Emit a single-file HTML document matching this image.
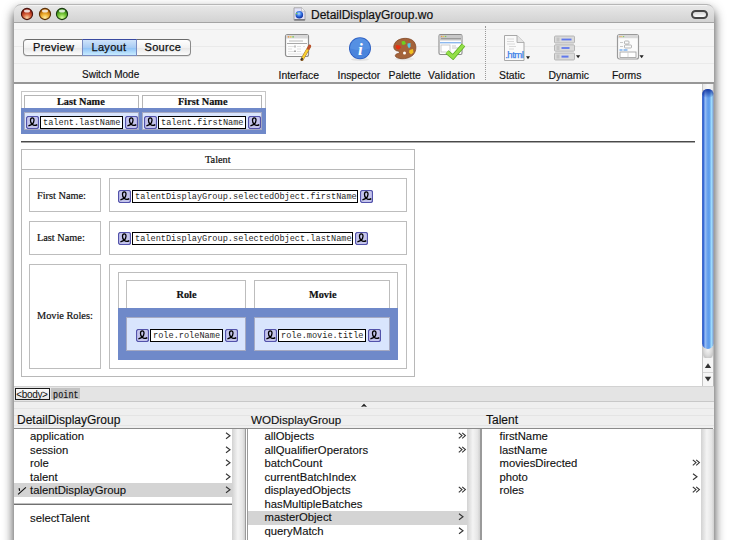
<!DOCTYPE html>
<html><head><meta charset="utf-8">
<style>
*{box-sizing:border-box;margin:0;padding:0}
html,body{width:729px;height:540px;overflow:hidden;background:#fff;position:relative;font-family:"Liberation Sans",sans-serif}
div,span,svg{position:absolute}
.nw{white-space:nowrap}
.ser{font-family:"Liberation Serif",serif}
.mono{font-family:"Liberation Mono",monospace}
#shadow{left:14px;top:4px;width:700px;height:560px;border-radius:7px 7px 0 0;box-shadow:0 6px 11px 0 rgba(0,0,0,0.8)}
#win{left:14px;top:4px;width:700px;height:560px;background:#f5f5f5;border-radius:7px 7px 0 0;overflow:hidden}
.light{top:7px;width:13px;height:13px;border-radius:50%}
.tl{top:69.5px;font-size:10.4px;color:#111;white-space:nowrap;-webkit-text-stroke:0.15px #111}
.stripe{left:14px;width:700px;height:1px;background:#eaeaea}
.tbox{height:13px;border:1px solid #000;background:#fff}
.tbox span{position:static;display:block;font-size:8.6px;line-height:12px;padding-left:2px;color:#262626;white-space:nowrap}
.gb{border:1px solid #bdbdbd}
.bi{font-size:11px;color:#111}
.bh{font-size:11.7px;color:#111}
.chev{font-size:11px;color:#444}
</style></head><body>
<div id="shadow"></div>
<div id="win"></div>

<div style="left:14px;top:4px;width:700px;height:18px;background:linear-gradient(#e8e8e8,#d3d3d3);border-top:1px solid #b6b6b6;border-radius:7px 7px 0 0"></div>
<div style="left:21px;top:5px;width:686px;height:1px;background:#f4f4f4"></div>
<div style="left:14px;top:22px;width:700px;height:1px;background:#a4a4a4"></div>
<svg style="left:20px;top:7px" width="14" height="14" viewBox="0 0 14 14"><defs><radialGradient id="g27" cx="50%" cy="85%" r="65%"><stop offset="0" stop-color="#f8d8a8"/><stop offset="0.55" stop-color="#d8603a"/><stop offset="1" stop-color="#9c2414"/></radialGradient></defs><circle cx="7" cy="7" r="5.6" fill="url(#g27)" stroke="#4a1610" stroke-width="1.1"/><ellipse cx="7" cy="3.9" rx="3" ry="1.5" fill="#fff" opacity="0.8"/></svg>
<svg style="left:37.6px;top:7px" width="14" height="14" viewBox="0 0 14 14"><defs><radialGradient id="g44" cx="50%" cy="85%" r="65%"><stop offset="0" stop-color="#fff0a8"/><stop offset="0.55" stop-color="#f0b030"/><stop offset="1" stop-color="#b86808"/></radialGradient></defs><circle cx="7" cy="7" r="5.6" fill="url(#g44)" stroke="#5a3008" stroke-width="1.1"/><ellipse cx="7" cy="3.9" rx="3" ry="1.5" fill="#fff" opacity="0.8"/></svg>
<svg style="left:55.1px;top:7px" width="14" height="14" viewBox="0 0 14 14"><defs><radialGradient id="g62" cx="50%" cy="85%" r="65%"><stop offset="0" stop-color="#d8ffa0"/><stop offset="0.55" stop-color="#78c838"/><stop offset="1" stop-color="#3a8a18"/></radialGradient></defs><circle cx="7" cy="7" r="5.6" fill="url(#g62)" stroke="#1a3a10" stroke-width="1.1"/><ellipse cx="7" cy="3.9" rx="3" ry="1.5" fill="#fff" opacity="0.8"/></svg>
<svg style="left:293px;top:7px" width="13" height="14" viewBox="0 0 13 14"><defs><radialGradient id="gl" cx="45%" cy="35%" r="60%"><stop offset="0" stop-color="#b8e0ff"/><stop offset="0.5" stop-color="#3a7ae8"/><stop offset="1" stop-color="#1030a0"/></radialGradient></defs><path d="M1 0.8h7.6l3.4 3.4v9H1z" fill="#e2e2f6" stroke="#9a9a9a" stroke-width="0.8"/><path d="M8.6 0.8v3.4H12" fill="#fafafa" stroke="#aaa" stroke-width="0.6"/><circle cx="6.3" cy="7.8" r="3.8" fill="url(#gl)"/><circle cx="3.6" cy="6.6" r="0.8" fill="#7ad040"/><rect x="1.4" y="12.4" width="10.4" height="0.9" fill="#444"/></svg>
<div class="nw" style="left:311px;top:7.5px;font-size:12px;color:#111;-webkit-text-stroke:0.2px #111">DetailDisplayGroup.wo</div>
<div style="left:690.5px;top:10px;width:17.5px;height:9px;border:2px solid #454545;border-radius:5px;background:linear-gradient(#d6d6d6,#fcfcfc)"></div>
<div class="stripe" style="top:29px"></div>
<div class="stripe" style="top:46px"></div>
<div class="stripe" style="top:63px"></div>
<div style="left:14px;top:82px;width:700px;height:2px;background:#979797"></div>
<div style="left:23px;top:39px;width:168px;height:17px;border:1px solid #8a8a8a;border-top-color:#6a6a6a;border-radius:4px;background:linear-gradient(#ffffff,#f2f2f2 50%,#e6e6e6 51%,#fcfcfc);box-shadow:0 1px 0 rgba(0,0,0,0.08)"></div>
<div style="left:82px;top:39px;width:54.5px;height:17px;border:1px solid #7a8cc0;border-top-color:#3a4aa0;background:linear-gradient(#d0e4fa,#a8ccf4 50%,#8cc0f6 51%,#c8ecff)"></div>
<div class="nw" style="left:33px;top:41px;font-size:11px;letter-spacing:0.3px;color:#111;-webkit-text-stroke:0.25px #111">Preview</div>
<div class="nw" style="left:91.5px;top:41px;font-size:11px;letter-spacing:0.3px;color:#111;-webkit-text-stroke:0.25px #111">Layout</div>
<div class="nw" style="left:144.5px;top:41px;font-size:11px;letter-spacing:0.3px;color:#111;-webkit-text-stroke:0.25px #111">Source</div>
<div class="tl" style="left:82px;top:69px;font-size:10px">Switch Mode</div>
<div class="tl" style="left:278.5px">Interface</div>
<div class="tl" style="left:337.5px">Inspector</div>
<div class="tl" style="left:388.5px">Palette</div>
<div class="tl" style="left:428px;letter-spacing:0.25px">Validation</div>
<div class="tl" style="left:499px">Static</div>
<div class="tl" style="left:548.5px">Dynamic</div>
<div class="tl" style="left:612px">Forms</div>
<div style="left:485px;top:26px;width:1px;height:54px;border-left:1px dotted #999"></div>
<svg style="left:284px;top:33px" width="28" height="28" viewBox="0 0 28 28">
<rect x="1.5" y="1.5" width="23" height="22" rx="2" fill="#fdfdfd" stroke="#8e8e8e" stroke-width="1.2"/>
<rect x="2" y="2" width="22" height="3.5" fill="#d8d8d8"/>
<circle cx="4.5" cy="3.8" r="0.9" fill="#e89a50"/><circle cx="6.8" cy="3.8" r="0.9" fill="#e8c850"/><circle cx="9.1" cy="3.8" r="0.9" fill="#80c860"/>
<rect x="5" y="7.5" width="14" height="1" fill="#bbb"/>
<rect x="3" y="10" width="20" height="1" fill="#a8a8a8"/>
<path d="M4 13.5h6M13 13.5h4M19 13.5h2M4 16h4M13 16h4M4 18.5h6M13 18.5h4M4 21h16" stroke="#d4d4d4" stroke-width="0.7"/>
<rect x="10.5" y="12.5" width="1" height="2" fill="#888"/><rect x="10.5" y="17.5" width="1" height="1.5" fill="#555"/>
<path d="M18 26.5L25.5 13.5" stroke="#9a6a30" stroke-width="3.2" stroke-linecap="round"/>
<path d="M18.3 26L25.3 13.8" stroke="#f8d030" stroke-width="2.3"/>
<path d="M24.3 15.5L25.8 12.8" stroke="#c05030" stroke-width="2.6" stroke-linecap="round"/>
<path d="M17.2 27.2l1.3-2.2" stroke="#333" stroke-width="1.6"/>
</svg>
<svg style="left:347px;top:36px" width="26" height="26" viewBox="0 0 26 26">
<ellipse cx="13" cy="23.5" rx="9" ry="1.5" fill="#000" opacity="0.08"/>
<circle cx="13" cy="12.3" r="11" fill="#2a5cc0"/>
<circle cx="13" cy="12.3" r="10.2" fill="#4a84dc"/>
<path d="M3 12.3A10 10 0 0 1 23 12.3Q13 16 3 12.3z" fill="#5e98e8" opacity="0.6"/>
<text x="13.3" y="19.2" font-family="Liberation Serif" font-style="italic" font-weight="bold" font-size="17" fill="#fff" text-anchor="middle">i</text>
</svg>
<svg style="left:391px;top:36px" width="27" height="25" viewBox="0 0 27 25">
<ellipse cx="13.5" cy="23" rx="10" ry="1.5" fill="#000" opacity="0.06"/>
<path d="M4 7C7 2 16 1 21 4C26 7 26 15 22 19C18 23 9 24 5 21C3.5 19.5 4.5 18 7 17.5C9 17 9 15.5 6.5 15C3 14.5 1.5 11 4 7z" fill="#a4633a" stroke="#7a4020" stroke-width="0.7"/>
<path d="M5 9C4 12 5.5 13.5 8 13.5L10 11.5L9 9.5z" fill="#e83010"/>
<path d="M10.5 5.5L13.5 4.8L15 7.5L13 9L11 8.5z" fill="#6cd020"/>
<path d="M16.5 7.5L19.5 7L19.5 10.5L18 12.5L16.5 10z" fill="#58c8e8"/>
<path d="M18.5 14L22 13L22.5 16.5L20 18.5L18 16.5z" fill="#f0c020"/>
<circle cx="13.5" cy="17" r="1.5" fill="#fff"/>
</svg>
<svg style="left:437px;top:33px" width="29" height="27" viewBox="0 0 29 27">
<rect x="2" y="1.5" width="23" height="20" rx="1.5" fill="#fdfdfd" stroke="#8a8a8a" stroke-width="1.1"/>
<rect x="2.5" y="2" width="22" height="5.5" fill="#c8c8c8"/>
<circle cx="4.6" cy="3.5" r="0.8" fill="#e89a50"/><circle cx="6.6" cy="3.5" r="0.8" fill="#e8c850"/><circle cx="8.6" cy="3.5" r="0.8" fill="#80c860"/>
<rect x="4" y="5" width="20" height="1.2" fill="#9a9a9a"/>
<rect x="3" y="9" width="21" height="1.4" fill="#8cb8ee"/>
<rect x="4" y="12" width="9" height="7" fill="#fff" stroke="#c0c0c0" stroke-width="0.8"/>
<path d="M15 13h4M15 15h6" stroke="#bbb" stroke-width="0.8"/>
<path d="M10 19L16 24L26.5 12" fill="none" stroke="#58a820" stroke-width="4.6" stroke-linejoin="miter"/>
<path d="M10 19L16 24L26.5 12" fill="none" stroke="#94e048" stroke-width="3.2"/>
</svg>
<svg style="left:503px;top:34px" width="28" height="28" viewBox="0 0 28 28">
<path d="M1.5 1.5H14L21 8.5V26.5H1.5z" fill="#fafafa" stroke="#a8a8a8" stroke-width="1"/>
<path d="M14 1.5V8.5H21" fill="#e4e4e4" stroke="#a0a0a0" stroke-width="0.8"/>
<path d="M4 5h7M4 7.5h7M4 10h8M6 12.5h7M6 15h5" stroke="#d0d0d0" stroke-width="0.8"/>
<text x="11.3" y="24.2" font-family="Liberation Sans" font-size="9.6" fill="#3a80e8" text-anchor="middle" letter-spacing="-0.5" stroke="#3a80e8" stroke-width="0.25">.html</text>
<path d="M23 22.3H27L25 25.3z" fill="#222"/>
</svg>
<svg style="left:553px;top:35px" width="29" height="26" viewBox="0 0 29 26">
<g stroke="#aaaaaa" stroke-width="0.8" fill="#dadada">
<rect x="1.5" y="1" width="20" height="7" rx="1"/>
<rect x="1.5" y="9.8" width="20" height="6.4" rx="1"/>
<rect x="1.5" y="18" width="20" height="7" rx="1"/>
</g>
<g fill="#c4c4c4"><rect x="3.5" y="2.5" width="3" height="4"/><rect x="3.5" y="11" width="3" height="4"/><rect x="3.5" y="19.5" width="3" height="4"/></g>
<g fill="#6078ec"><rect x="8.5" y="3.6" width="10" height="1.8"/><rect x="8.5" y="12.1" width="8" height="1.8"/><rect x="8.5" y="20.6" width="7" height="2"/></g>
<path d="M23 20.3H27.2L25.1 23.3z" fill="#222"/>
</svg>
<svg style="left:616px;top:33px" width="29" height="28" viewBox="0 0 29 28">
<rect x="1.5" y="1.5" width="21" height="24.5" rx="2" fill="#fbfbfb" stroke="#9a9a9a" stroke-width="1.2"/>
<rect x="2" y="2" width="20" height="3.2" fill="#d8d8d8"/>
<circle cx="4" cy="3.6" r="0.7" fill="#e89a50"/><circle cx="5.8" cy="3.6" r="0.7" fill="#e8c850"/><circle cx="7.6" cy="3.6" r="0.7" fill="#80c860"/>
<path d="M4 9.5h3M4 13.5h3" stroke="#bbb" stroke-width="0.8"/>
<rect x="8.5" y="8" width="4.5" height="3" rx="0.8" fill="none" stroke="#999" stroke-width="0.7"/>
<rect x="8.5" y="12" width="7" height="3" rx="0.8" fill="none" stroke="#999" stroke-width="0.7"/>
<path d="M3.5 17h3M7.5 17h4" stroke="#3a8ae8" stroke-width="1"/>
<rect x="4" y="19" width="16" height="5.5" fill="#fff" stroke="#999" stroke-width="0.8"/>
<path d="M12 19.5v5" stroke="#bbb" stroke-width="0.6"/>
<path d="M23.5 22.3H27.7L25.6 25.3z" fill="#222"/>
</svg>
<div style="left:14px;top:84px;width:688px;height:302px;background:#fff"></div>
<div style="left:21px;top:91px;width:245px;height:43px;border:1.5px solid #c6c6c6"></div>
<div style="left:24px;top:95px;width:115px;height:14px;border:1px solid #b5b5b5"></div>
<div style="left:142px;top:95px;width:120px;height:14px;border:1px solid #b5b5b5"></div>
<div class="nw" style="left:57px;top:96px;font:bold 10.3px Liberation Serif;color:#111;-webkit-text-stroke:0.2px #111">Last Name</div>
<div class="nw" style="left:178px;top:96px;font:bold 10.3px Liberation Serif;color:#111;-webkit-text-stroke:0.2px #111">First Name</div>
<div style="left:21px;top:108px;width:245px;height:26px;background:#6f89c9"></div>
<div style="left:24px;top:112px;width:115px;height:18px;background:#d9e5fd;border:1px solid #a6aac2"></div>
<div style="left:142px;top:112px;width:120px;height:18px;background:#d9e5fd;border:1px solid #a6aac2"></div>
<svg style="left:26px;top:116px" width="13" height="13" viewBox="0 0 13 13"><rect x="0.5" y="0.5" width="12" height="12" rx="2" fill="#c4c4ec" stroke="#5252aa" stroke-width="1.2"/><path d="M2.4 9.9C4 9.4 5.5 8.9 6.4 8C8.3 6.2 8.8 1.9 6.3 1.9C3.8 1.9 4.1 6.2 5.9 8C7 9.1 8.6 10.3 11.3 8.6" fill="none" stroke="#000" stroke-width="1.3"/></svg>
<div class="tbox" style="left:40px;top:116px;width:83px"><span class="mono">talent.lastName</span></div>
<svg style="left:125px;top:116px" width="13" height="13" viewBox="0 0 13 13"><rect x="0.5" y="0.5" width="12" height="12" rx="2" fill="#c4c4ec" stroke="#5252aa" stroke-width="1.2"/><path d="M2.4 9.9C4 9.4 5.5 8.9 6.4 8C8.3 6.2 8.8 1.9 6.3 1.9C3.8 1.9 4.1 6.2 5.9 8C7 9.1 8.6 10.3 11.3 8.6" fill="none" stroke="#000" stroke-width="1.3"/></svg>
<svg style="left:144px;top:116px" width="13" height="13" viewBox="0 0 13 13"><rect x="0.5" y="0.5" width="12" height="12" rx="2" fill="#c4c4ec" stroke="#5252aa" stroke-width="1.2"/><path d="M2.4 9.9C4 9.4 5.5 8.9 6.4 8C8.3 6.2 8.8 1.9 6.3 1.9C3.8 1.9 4.1 6.2 5.9 8C7 9.1 8.6 10.3 11.3 8.6" fill="none" stroke="#000" stroke-width="1.3"/></svg>
<div class="tbox" style="left:158px;top:116px;width:88px"><span class="mono">talent.firstName</span></div>
<svg style="left:248px;top:116px" width="13" height="13" viewBox="0 0 13 13"><rect x="0.5" y="0.5" width="12" height="12" rx="2" fill="#c4c4ec" stroke="#5252aa" stroke-width="1.2"/><path d="M2.4 9.9C4 9.4 5.5 8.9 6.4 8C8.3 6.2 8.8 1.9 6.3 1.9C3.8 1.9 4.1 6.2 5.9 8C7 9.1 8.6 10.3 11.3 8.6" fill="none" stroke="#000" stroke-width="1.3"/></svg>
<div style="left:21px;top:141px;width:674px;height:1px;background:#4a4a4a"></div>
<div style="left:21px;top:142px;width:674px;height:1px;background:#a8a8a8"></div>
<div style="left:21px;top:149px;width:394px;height:228px;border:1.5px solid #b8b8b8"></div>
<div style="left:21px;top:169px;width:394px;height:1px;background:#b8b8b8"></div>
<div class="nw" style="left:205px;top:153.9px;font:10.3px Liberation Serif;color:#111;-webkit-text-stroke:0.2px #111">Talent</div>
<div style="left:29px;top:178px;width:72px;height:34px;border:1px solid #bdbdbd"></div>
<div style="left:109px;top:178px;width:298px;height:34px;border:1px solid #bdbdbd"></div>
<div style="left:29px;top:221px;width:72px;height:34px;border:1px solid #bdbdbd"></div>
<div style="left:109px;top:221px;width:298px;height:34px;border:1px solid #bdbdbd"></div>
<div style="left:29px;top:264px;width:72px;height:105px;border:1px solid #bdbdbd"></div>
<div style="left:109px;top:264px;width:298px;height:105px;border:1px solid #bdbdbd"></div>
<div class="nw" style="left:37px;top:189.8px;font:10.3px Liberation Serif;color:#111;-webkit-text-stroke:0.2px #111">First Name:</div>
<div class="nw" style="left:37px;top:232.3px;font:10.3px Liberation Serif;color:#111;-webkit-text-stroke:0.2px #111">Last Name:</div>
<div class="nw" style="left:37px;top:310.2px;font:10.3px Liberation Serif;color:#111;-webkit-text-stroke:0.2px #111">Movie Roles:</div>
<svg style="left:118px;top:190px" width="13" height="13" viewBox="0 0 13 13"><rect x="0.5" y="0.5" width="12" height="12" rx="2" fill="#c4c4ec" stroke="#5252aa" stroke-width="1.2"/><path d="M2.4 9.9C4 9.4 5.5 8.9 6.4 8C8.3 6.2 8.8 1.9 6.3 1.9C3.8 1.9 4.1 6.2 5.9 8C7 9.1 8.6 10.3 11.3 8.6" fill="none" stroke="#000" stroke-width="1.3"/></svg>
<div class="tbox" style="left:132px;top:190px;width:226px"><span class="mono">talentDisplayGroup.selectedObject.firstName</span></div>
<svg style="left:360px;top:190px" width="13" height="13" viewBox="0 0 13 13"><rect x="0.5" y="0.5" width="12" height="12" rx="2" fill="#c4c4ec" stroke="#5252aa" stroke-width="1.2"/><path d="M2.4 9.9C4 9.4 5.5 8.9 6.4 8C8.3 6.2 8.8 1.9 6.3 1.9C3.8 1.9 4.1 6.2 5.9 8C7 9.1 8.6 10.3 11.3 8.6" fill="none" stroke="#000" stroke-width="1.3"/></svg>
<svg style="left:118px;top:232px" width="13" height="13" viewBox="0 0 13 13"><rect x="0.5" y="0.5" width="12" height="12" rx="2" fill="#c4c4ec" stroke="#5252aa" stroke-width="1.2"/><path d="M2.4 9.9C4 9.4 5.5 8.9 6.4 8C8.3 6.2 8.8 1.9 6.3 1.9C3.8 1.9 4.1 6.2 5.9 8C7 9.1 8.6 10.3 11.3 8.6" fill="none" stroke="#000" stroke-width="1.3"/></svg>
<div class="tbox" style="left:132px;top:232px;width:221px"><span class="mono">talentDisplayGroup.selectedObject.lastName</span></div>
<svg style="left:355px;top:232px" width="13" height="13" viewBox="0 0 13 13"><rect x="0.5" y="0.5" width="12" height="12" rx="2" fill="#c4c4ec" stroke="#5252aa" stroke-width="1.2"/><path d="M2.4 9.9C4 9.4 5.5 8.9 6.4 8C8.3 6.2 8.8 1.9 6.3 1.9C3.8 1.9 4.1 6.2 5.9 8C7 9.1 8.6 10.3 11.3 8.6" fill="none" stroke="#000" stroke-width="1.3"/></svg>
<div style="left:118px;top:272px;width:280px;height:88px;border:1px solid #bdbdbd"></div>
<div style="left:126px;top:280px;width:120px;height:29px;border:1px solid #bdbdbd"></div>
<div style="left:254px;top:280px;width:136px;height:29px;border:1px solid #bdbdbd"></div>
<div class="nw" style="left:176.5px;top:288.5px;font:bold 10.3px Liberation Serif;color:#111;-webkit-text-stroke:0.2px #111">Role</div>
<div class="nw" style="left:309px;top:288.5px;font:bold 10.3px Liberation Serif;color:#111;-webkit-text-stroke:0.2px #111">Movie</div>
<div style="left:118px;top:308px;width:280px;height:52px;background:#6f89c9"></div>
<div style="left:126px;top:317px;width:120px;height:34px;background:#d9e5fd;border:1px solid #a6aac2"></div>
<div style="left:254px;top:317px;width:136px;height:34px;background:#d9e5fd;border:1px solid #a6aac2"></div>
<svg style="left:136px;top:329px" width="13" height="13" viewBox="0 0 13 13"><rect x="0.5" y="0.5" width="12" height="12" rx="2" fill="#c4c4ec" stroke="#5252aa" stroke-width="1.2"/><path d="M2.4 9.9C4 9.4 5.5 8.9 6.4 8C8.3 6.2 8.8 1.9 6.3 1.9C3.8 1.9 4.1 6.2 5.9 8C7 9.1 8.6 10.3 11.3 8.6" fill="none" stroke="#000" stroke-width="1.3"/></svg>
<div class="tbox" style="left:150px;top:329px;width:73px"><span class="mono">role.roleName</span></div>
<svg style="left:225px;top:329px" width="13" height="13" viewBox="0 0 13 13"><rect x="0.5" y="0.5" width="12" height="12" rx="2" fill="#c4c4ec" stroke="#5252aa" stroke-width="1.2"/><path d="M2.4 9.9C4 9.4 5.5 8.9 6.4 8C8.3 6.2 8.8 1.9 6.3 1.9C3.8 1.9 4.1 6.2 5.9 8C7 9.1 8.6 10.3 11.3 8.6" fill="none" stroke="#000" stroke-width="1.3"/></svg>
<svg style="left:264px;top:329px" width="13" height="13" viewBox="0 0 13 13"><rect x="0.5" y="0.5" width="12" height="12" rx="2" fill="#c4c4ec" stroke="#5252aa" stroke-width="1.2"/><path d="M2.4 9.9C4 9.4 5.5 8.9 6.4 8C8.3 6.2 8.8 1.9 6.3 1.9C3.8 1.9 4.1 6.2 5.9 8C7 9.1 8.6 10.3 11.3 8.6" fill="none" stroke="#000" stroke-width="1.3"/></svg>
<div class="tbox" style="left:278px;top:329px;width:88px"><span class="mono">role.movie.title</span></div>
<svg style="left:368px;top:329px" width="13" height="13" viewBox="0 0 13 13"><rect x="0.5" y="0.5" width="12" height="12" rx="2" fill="#c4c4ec" stroke="#5252aa" stroke-width="1.2"/><path d="M2.4 9.9C4 9.4 5.5 8.9 6.4 8C8.3 6.2 8.8 1.9 6.3 1.9C3.8 1.9 4.1 6.2 5.9 8C7 9.1 8.6 10.3 11.3 8.6" fill="none" stroke="#000" stroke-width="1.3"/></svg>
<div style="left:702px;top:84px;width:12px;height:302px;background:linear-gradient(90deg,#e6e6e6,#f8f8f8 50%,#ececec);border-left:1px solid #c6c6c6;border-right:1px solid #b8b8b8"></div>
<div style="left:703px;top:347px;width:10px;height:12px;background:radial-gradient(ellipse 60% 80% at 50% 20%,#f4f4f4 0,#dcdcdc 60%,#c4c4c4 100%);border-radius:0 0 5px 5px"></div>
<svg style="left:702px;top:89px" width="12" height="260" viewBox="0 0 12 260"><defs>
<linearGradient id="th" x1="0" x2="1" y1="0" y2="0"><stop offset="0" stop-color="#1c4cc4"/><stop offset="0.14" stop-color="#3c70dc"/><stop offset="0.26" stop-color="#9cc0f4"/><stop offset="0.45" stop-color="#6aa2ee"/><stop offset="0.62" stop-color="#5a9aec"/><stop offset="0.85" stop-color="#a4e2ff"/><stop offset="1" stop-color="#6a8ac8"/></linearGradient>
<linearGradient id="tt" x1="0" x2="0" y1="0" y2="1"><stop offset="0" stop-color="#0a2a9a" stop-opacity="0.9"/><stop offset="1" stop-color="#0a2a9a" stop-opacity="0"/></linearGradient></defs>
<rect x="0.2" y="0" width="11.3" height="260" rx="5.6" fill="url(#th)"/>
<rect x="0.2" y="0" width="11.3" height="9" rx="5.6" fill="url(#tt)"/>
</svg>
<div style="left:702px;top:358px;width:12px;height:28px;background:#f6f6f6;border-left:1px solid #c6c6c6;border-right:1px solid #b8b8b8"></div>
<div style="left:703px;top:372px;width:10px;height:1px;background:#d4d4d4"></div>
<svg style="left:704px;top:362px" width="8" height="8"><path d="M4 1.3L7.2 6H0.8z" fill="#333"/></svg>
<svg style="left:704px;top:375px" width="8" height="8"><path d="M4 6.5L7.2 1.8H0.8z" fill="#333"/></svg>
<div style="left:14px;top:386px;width:700px;height:16px;background:#e4e4e4;border-top:1px solid #d2d2d2;border-bottom:1px solid #c8c8c8"></div>
<div style="left:14px;top:402px;width:700px;height:26px;background:#efefef"></div>
<div style="left:14px;top:408px;width:700px;height:1px;background:#e4e4e4"></div>
<div style="left:14px;top:415px;width:700px;height:1px;background:#e4e4e4"></div>
<div style="left:14px;top:425px;width:700px;height:1px;background:#e4e4e4"></div>
<div style="left:15px;top:388px;width:35px;height:12px;border:1.5px solid #1a1a1a;background:linear-gradient(#fafafa,#e6e6e6)"></div>
<div class="nw" style="left:16.3px;top:388.5px;font-size:10px;color:#111;letter-spacing:-0.35px">&lt;body&gt;</div>
<div style="left:51px;top:388px;width:28.5px;height:11px;background:#c2c2c2"></div>
<div class="nw" style="left:53px;top:390.5px;font:8.4px Liberation Mono;color:#111;letter-spacing:0.1px;-webkit-text-stroke:0.15px #111;transform:scaleY(1.2);transform-origin:0 80%">point</div>
<svg style="left:361px;top:403px" width="6" height="4"><path d="M0.6 3.6L3 0.9L5.4 3.6Q3 2.5 0.6 3.6z" fill="#222" stroke="#222" stroke-width="0.6"/></svg>
<div class="nw" style="left:17px;top:412.5px;font-size:12px;color:#111;-webkit-text-stroke:0.15px #111">DetailDisplayGroup</div>
<div class="nw" style="left:251px;top:412.5px;font-size:12px;color:#111;-webkit-text-stroke:0.15px #111;font-size:11.6px">WODisplayGroup</div>
<div class="nw" style="left:486px;top:412.5px;font-size:12px;color:#111;-webkit-text-stroke:0.15px #111">Talent</div>
<div style="left:14px;top:428px;width:699px;height:1px;background:#8a8a8a"></div>
<div style="left:14px;top:429px;width:699px;height:111px;background:#fff"></div>
<div style="left:232px;top:429px;width:13px;height:111px;background:linear-gradient(90deg,#d2d2d2,#f4f4f4 45%,#e6e6e6 80%,#d0d0d0)"></div>
<div style="left:467px;top:429px;width:13px;height:111px;background:linear-gradient(90deg,#d2d2d2,#f4f4f4 45%,#e6e6e6 80%,#d0d0d0)"></div>
<div style="left:701px;top:429px;width:13px;height:111px;background:linear-gradient(90deg,#d2d2d2,#f4f4f4 45%,#e6e6e6 80%,#d0d0d0)"></div>
<div style="left:245px;top:429px;width:3px;height:111px;background:#fff;border-left:1px solid #9a9a9a;border-right:1px solid #9a9a9a"></div>
<div style="left:480px;top:429px;width:2px;height:111px;background:#fff;border-left:1px solid #9a9a9a;border-right:1px solid #9a9a9a"></div>
<div class="nw" style="left:30px;top:430.2px;font-size:11.3px;color:#111;-webkit-text-stroke:0.12px #111">application</div>
<svg style="left:224.5px;top:432px" width="8" height="8"><path d="M1 0.8L5 3.8L1 6.8" fill="none" stroke="#333" stroke-width="1.1"/></svg>
<div class="nw" style="left:30px;top:443.7px;font-size:11.3px;color:#111;-webkit-text-stroke:0.12px #111">session</div>
<svg style="left:224.5px;top:446px" width="8" height="8"><path d="M1 0.8L5 3.8L1 6.8" fill="none" stroke="#333" stroke-width="1.1"/></svg>
<div class="nw" style="left:30px;top:457.2px;font-size:11.3px;color:#111;-webkit-text-stroke:0.12px #111">role</div>
<svg style="left:224.5px;top:459px" width="8" height="8"><path d="M1 0.8L5 3.8L1 6.8" fill="none" stroke="#333" stroke-width="1.1"/></svg>
<div class="nw" style="left:30px;top:470.7px;font-size:11.3px;color:#111;-webkit-text-stroke:0.12px #111">talent</div>
<svg style="left:224.5px;top:473px" width="8" height="8"><path d="M1 0.8L5 3.8L1 6.8" fill="none" stroke="#333" stroke-width="1.1"/></svg>
<div style="left:14px;top:483px;width:218px;height:14px;background:#d4d4d4"></div>
<div class="nw" style="left:30px;top:484.2px;font-size:11.3px;color:#111;-webkit-text-stroke:0.12px #111">talentDisplayGroup</div>
<svg style="left:224.5px;top:486px" width="8" height="8"><path d="M1 0.8L5 3.8L1 6.8" fill="none" stroke="#333" stroke-width="1.1"/></svg>
<svg style="left:17px;top:486px" width="10" height="10"><path d="M2.1 2.2L2.6 4.8M1.1 8.4L8.9 1.4" fill="none" stroke="#111" stroke-width="1.15"/></svg>
<div style="left:14px;top:503px;width:218px;height:1px;background:#c0c0c0"></div>
<div style="left:14px;top:504px;width:218px;height:1px;background:#707070"></div>
<div class="nw" style="left:30px;top:511.5px;font-size:11.3px;color:#111;-webkit-text-stroke:0.12px #111">selectTalent</div>
<div class="nw" style="left:264.5px;top:430.2px;font-size:11.3px;color:#111;-webkit-text-stroke:0.12px #111">allObjects</div>
<svg style="left:458px;top:432px" width="9" height="8"><path d="M0.8 0.8L4 3.6L0.8 6.4M4.2 0.8L7.4 3.6L4.2 6.4" fill="none" stroke="#333" stroke-width="1.1"/></svg>
<div class="nw" style="left:264.5px;top:443.7px;font-size:11.3px;color:#111;-webkit-text-stroke:0.12px #111">allQualifierOperators</div>
<svg style="left:458px;top:446px" width="9" height="8"><path d="M0.8 0.8L4 3.6L0.8 6.4M4.2 0.8L7.4 3.6L4.2 6.4" fill="none" stroke="#333" stroke-width="1.1"/></svg>
<div class="nw" style="left:264.5px;top:457.2px;font-size:11.3px;color:#111;-webkit-text-stroke:0.12px #111">batchCount</div>
<div class="nw" style="left:264.5px;top:470.7px;font-size:11.3px;color:#111;-webkit-text-stroke:0.12px #111">currentBatchIndex</div>
<div class="nw" style="left:264.5px;top:484.2px;font-size:11.3px;color:#111;-webkit-text-stroke:0.12px #111">displayedObjects</div>
<svg style="left:458px;top:486px" width="9" height="8"><path d="M0.8 0.8L4 3.6L0.8 6.4M4.2 0.8L7.4 3.6L4.2 6.4" fill="none" stroke="#333" stroke-width="1.1"/></svg>
<div class="nw" style="left:264.5px;top:497.7px;font-size:11.3px;color:#111;-webkit-text-stroke:0.12px #111">hasMultipleBatches</div>
<div style="left:248px;top:510.5px;width:219px;height:14px;background:#d4d4d4"></div>
<div class="nw" style="left:264.5px;top:511.2px;font-size:11.3px;color:#111;-webkit-text-stroke:0.12px #111">masterObject</div>
<svg style="left:458px;top:513px" width="8" height="8"><path d="M1 0.8L5 3.8L1 6.8" fill="none" stroke="#333" stroke-width="1.1"/></svg>
<div class="nw" style="left:264.5px;top:524.7px;font-size:11.3px;color:#111;-webkit-text-stroke:0.12px #111">queryMatch</div>
<svg style="left:458px;top:527px" width="8" height="8"><path d="M1 0.8L5 3.8L1 6.8" fill="none" stroke="#333" stroke-width="1.1"/></svg>
<div class="nw" style="left:499.5px;top:430.2px;font-size:11.3px;color:#111;-webkit-text-stroke:0.12px #111">firstName</div>
<div class="nw" style="left:499.5px;top:443.7px;font-size:11.3px;color:#111;-webkit-text-stroke:0.12px #111">lastName</div>
<div class="nw" style="left:499.5px;top:457.2px;font-size:11.3px;color:#111;-webkit-text-stroke:0.12px #111">moviesDirected</div>
<svg style="left:692px;top:459px" width="9" height="8"><path d="M0.8 0.8L4 3.6L0.8 6.4M4.2 0.8L7.4 3.6L4.2 6.4" fill="none" stroke="#333" stroke-width="1.1"/></svg>
<div class="nw" style="left:499.5px;top:470.7px;font-size:11.3px;color:#111;-webkit-text-stroke:0.12px #111">photo</div>
<svg style="left:692px;top:473px" width="8" height="8"><path d="M1 0.8L5 3.8L1 6.8" fill="none" stroke="#333" stroke-width="1.1"/></svg>
<div class="nw" style="left:499.5px;top:484.2px;font-size:11.3px;color:#111;-webkit-text-stroke:0.12px #111">roles</div>
<svg style="left:692px;top:486px" width="9" height="8"><path d="M0.8 0.8L4 3.6L0.8 6.4M4.2 0.8L7.4 3.6L4.2 6.4" fill="none" stroke="#333" stroke-width="1.1"/></svg>
</body></html>
